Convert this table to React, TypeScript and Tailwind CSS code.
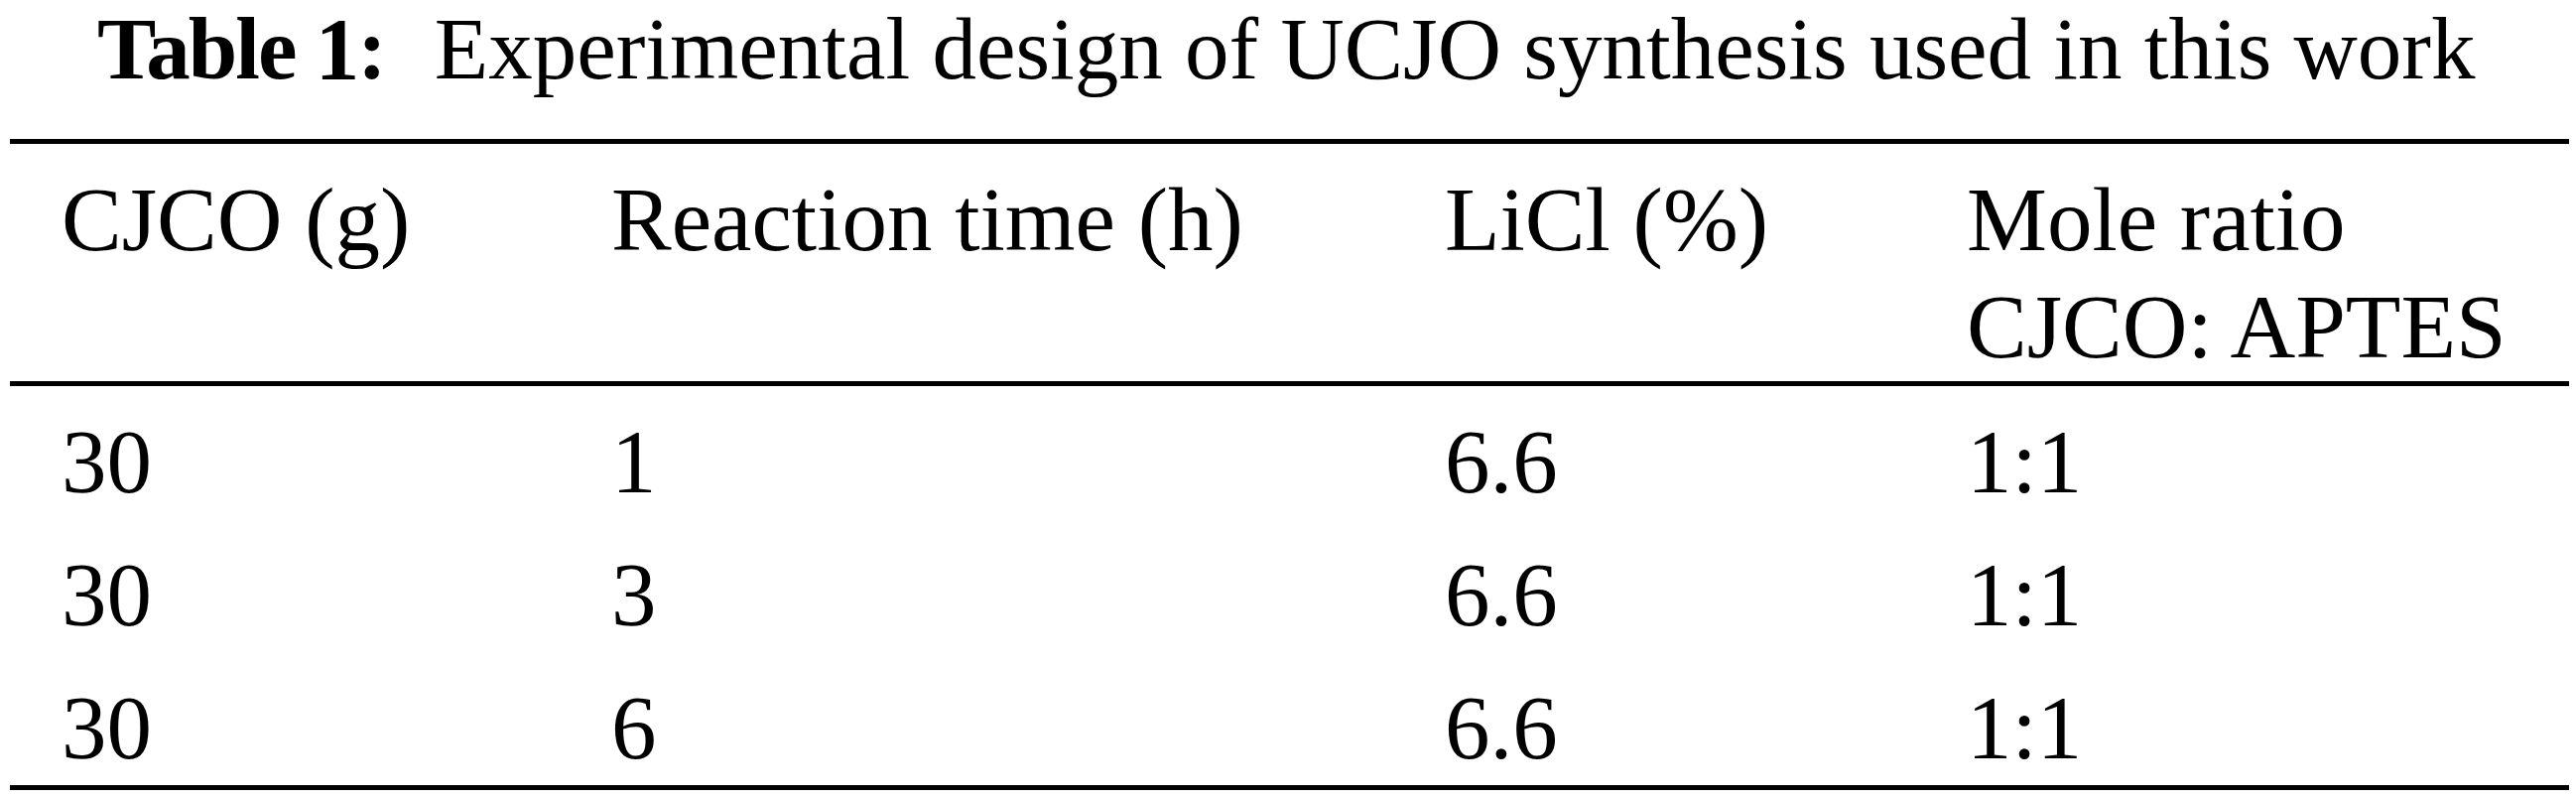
import React from "react";

const rows = [
  { cjco: "30", time: "1", licl: "6.6", ratio: "1:1" },
  { cjco: "30", time: "3", licl: "6.6", ratio: "1:1" },
  { cjco: "30", time: "6", licl: "6.6", ratio: "1:1" },
];

export default function App() {
  return (
    <div className="w-[2596px] h-[805px] bg-white text-black font-['Liberation_Serif','Times_New_Roman',serif] overflow-hidden">
      <div className="h-[140px] pl-[98px] text-[89px] leading-[99px] whitespace-nowrap">
        <span className="font-bold tracking-[-2px]">Table 1:</span>
        <span className="ml-[50px]">Experimental design of UCJO synthesis used in this work</span>
      </div>
      <div className="ml-[10px] mr-[7px] text-[91px] border-t-[5px] border-b-[5px] border-black">
        <div className="grid grid-cols-[554px_840px_526px_1fr] pl-[52px] pt-[23px] border-b-[5px] border-black leading-[108px]">
          <div>CJCO (g)</div>
          <div>Reaction time (h)</div>
          <div>LiCl (%)</div>
          <div>
            <div>Mole ratio</div>
            <div>CJCO: APTES</div>
          </div>
        </div>
        {rows.map((r, idx) => (
          <div key={idx} className="grid grid-cols-[554px_840px_526px_1fr] pl-[52px] pt-[23px] pb-[3px] leading-[108px]">
            <div>{r.cjco}</div>
            <div>{r.time}</div>
            <div>{r.licl}</div>
            <div>{r.ratio}</div>
          </div>
        ))}
      </div>
    </div>
  );
}
